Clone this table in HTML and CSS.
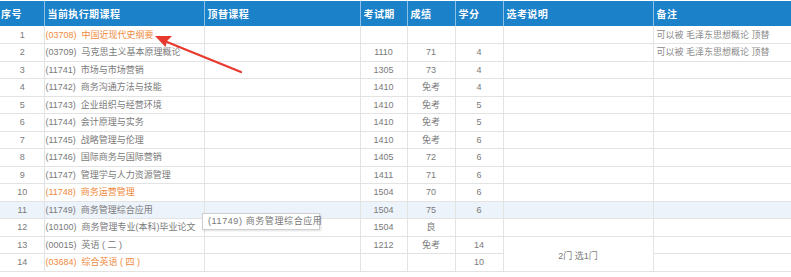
FILE: index.html
```html
<!DOCTYPE html>
<html lang="zh-CN">
<head>
<meta charset="utf-8">
<title>课程</title>
<link rel="stylesheet" href="styles.css">
</head>
<body>
<div class="wrap">
  <table class="grid">
    <colgroup>
      <col class="c-no"><col class="c-cur"><col class="c-rep"><col class="c-term"><col class="c-score"><col class="c-credit"><col class="c-note"><col class="c-remark">
    </colgroup>
    <thead>
      <tr>
        <th class="first">序号</th>
        <th>当前执行期课程</th>
        <th>顶替课程</th>
        <th>考试期</th>
        <th>成绩</th>
        <th>学分</th>
        <th>选考说明</th>
        <th>备注</th>
      </tr>
    </thead>
    <tbody>
      <tr><td class="n">1</td><td class="course hot">(03708) &nbsp;中国近现代史纲要</td><td></td><td></td><td></td><td></td><td></td><td class="rm">可以被 毛泽东思想概论 顶替</td></tr>
      <tr><td class="n">2</td><td class="course">(03709) &nbsp;马克思主义基本原理概论</td><td></td><td class="c">1110</td><td class="c">71</td><td class="c">4</td><td></td><td class="rm">可以被 毛泽东思想概论 顶替</td></tr>
      <tr><td class="n">3</td><td class="course">(11741) &nbsp;市场与市场营销</td><td></td><td class="c">1305</td><td class="c">73</td><td class="c">4</td><td></td><td></td></tr>
      <tr><td class="n">4</td><td class="course">(11742) &nbsp;商务沟通方法与技能</td><td></td><td class="c">1410</td><td class="c">免考</td><td class="c">4</td><td></td><td></td></tr>
      <tr><td class="n">5</td><td class="course">(11743) &nbsp;企业组织与经营环境</td><td></td><td class="c">1410</td><td class="c">免考</td><td class="c">5</td><td></td><td></td></tr>
      <tr><td class="n">6</td><td class="course">(11744) &nbsp;会计原理与实务</td><td></td><td class="c">1410</td><td class="c">免考</td><td class="c">5</td><td></td><td></td></tr>
      <tr><td class="n">7</td><td class="course">(11745) &nbsp;战略管理与伦理</td><td></td><td class="c">1410</td><td class="c">免考</td><td class="c">6</td><td></td><td></td></tr>
      <tr><td class="n">8</td><td class="course">(11746) &nbsp;国际商务与国际营销</td><td></td><td class="c">1405</td><td class="c">72</td><td class="c">6</td><td></td><td></td></tr>
      <tr><td class="n">9</td><td class="course">(11747) &nbsp;管理学与人力资源管理</td><td></td><td class="c">1411</td><td class="c">71</td><td class="c">6</td><td></td><td></td></tr>
      <tr><td class="n">10</td><td class="course hot">(11748) &nbsp;商务运营管理</td><td></td><td class="c">1504</td><td class="c">70</td><td class="c">6</td><td></td><td></td></tr>
      <tr class="sel"><td class="n">11</td><td class="course">(11749) &nbsp;商务管理综合应用</td><td></td><td class="c">1504</td><td class="c">75</td><td class="c">6</td><td></td><td></td></tr>
      <tr><td class="n">12</td><td class="course">(10100) &nbsp;商务管理专业(本科)毕业论文</td><td></td><td class="c">1504</td><td class="c">良</td><td class="c"></td><td></td><td></td></tr>
      <tr><td class="n">13</td><td class="course">(00015) &nbsp;英语 ( 二 )</td><td></td><td class="c">1212</td><td class="c">免考</td><td class="c">14</td><td class="c merged" rowspan="2">2门 选1门</td><td></td></tr>
      <tr><td class="n">14</td><td class="course hot">(03684) &nbsp;综合英语 ( 四 )</td><td></td><td class="c"></td><td class="c"></td><td class="c">10</td><td></td></tr>
    </tbody>
  </table>

  <div class="tip">(11749) 商务管理综合应用</div>

  <svg class="arrow" width="100" height="50" viewBox="0 0 100 50" aria-hidden="true">
    <path d="M88 39 L14 9" stroke="#e8392f" stroke-width="2.2" stroke-linecap="round" fill="none"/>
    <path d="M2 3 L19 3 L14 8 L12.5 14 Z" fill="#e8392f"/>
  </svg>
</div>
</body>
</html>
```

FILE: styles.css
```css
html, body {
  margin: 0;
  padding: 0;
  background: #ffffff;
}

.wrap {
  position: relative;
  width: 791px;
  padding-top: 1px;
  overflow: hidden;
}

.grid {
  width: 791px;
  table-layout: fixed;
  border-collapse: collapse;
  font-family: "Liberation Sans", "Noto Sans CJK SC", sans-serif;
  font-size: 9px;
  color: #7a7a7a;
}

.c-no { width: 44px; }
.c-cur { width: 160px; }
.c-rep { width: 156px; }
.c-term { width: 47px; }
.c-score { width: 48px; }
.c-credit { width: 48px; }
.c-note { width: 150px; }
.c-remark { width: 138px; }

.grid thead tr {
  height: 25px;
  background: #1b82c9;
}

.grid th {
  color: #ffffff;
  font-weight: bold;
  font-size: 10px;
  letter-spacing: 0.4px;
  text-align: left;
  padding: 0 0 0 3px;
  border-right: 1px solid #8cc0e6;
  white-space: nowrap;
  overflow: hidden;
}

.grid th.first {
  padding-left: 1px;
}

.grid th:last-child {
  border-right: none;
}

.grid tbody tr {
  height: 17.5px;
}

.grid td {
  padding: 0;
  border: 1px solid #e3e3e3;
  border-top: none;
  white-space: nowrap;
  overflow: hidden;
  line-height: 12px;
  vertical-align: middle;
}

.grid td:first-child {
  border-left: none;
}

.grid td:last-child {
  border-right: none;
}

.grid td.n {
  text-align: center;
  padding-left: 1px;
}

.grid td.course {
  padding-left: 1px;
}

.grid td.c {
  text-align: center;
}

.grid td.rm {
  padding-left: 3px;
  color: #8a8a8a;
}

.grid td.merged {
  padding-top: 4px;
}

.hot {
  color: #ef8a3c;
}

.grid tr.sel td {
  background: #edf3fa;
}

.tip {
  position: absolute;
  left: 202px;
  top: 213px;
  width: 111px;
  height: 15px;
  padding-left: 5px;
  background: #ffffff;
  border: 1px solid #cfcfcf;
  box-shadow: 1px 1px 2px rgba(0, 0, 0, 0.12);
  font-family: "Liberation Sans", "Noto Sans CJK SC", sans-serif;
  font-size: 9px;
  letter-spacing: 0.6px;
  line-height: 15px;
  color: #777777;
  white-space: nowrap;
}

.arrow {
  position: absolute;
  left: 153px;
  top: 33px;
}
```
